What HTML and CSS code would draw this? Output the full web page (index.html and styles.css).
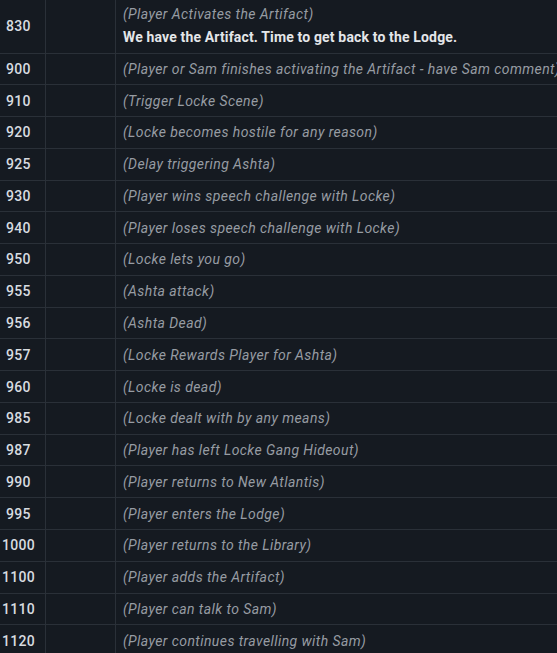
FILE: index.html
```html
<!DOCTYPE html>
<html>
<head>
<meta charset="utf-8">
<link rel="stylesheet" href="styles.css">
</head>
<body>
<div class="table">
  <div class="row first">
    <div class="cell num">830</div>
    <div class="cell blank"></div>
    <div class="cell text">
      <div class="note">(Player Activates the Artifact)</div>
      <div class="line">We have the Artifact. Time to get back to the Lodge.</div>
    </div>
  </div>
  <div class="row"><div class="cell num">900</div><div class="cell blank"></div><div class="cell text"><span class="note">(Player or Sam finishes activating the Artifact - have Sam comment)</span></div></div>
  <div class="row"><div class="cell num">910</div><div class="cell blank"></div><div class="cell text"><span class="note">(Trigger Locke Scene)</span></div></div>
  <div class="row"><div class="cell num">920</div><div class="cell blank"></div><div class="cell text"><span class="note">(Locke becomes hostile for any reason)</span></div></div>
  <div class="row"><div class="cell num">925</div><div class="cell blank"></div><div class="cell text"><span class="note">(Delay triggering Ashta)</span></div></div>
  <div class="row"><div class="cell num">930</div><div class="cell blank"></div><div class="cell text"><span class="note">(Player wins speech challenge with Locke)</span></div></div>
  <div class="row"><div class="cell num">940</div><div class="cell blank"></div><div class="cell text"><span class="note">(Player loses speech challenge with Locke)</span></div></div>
  <div class="row"><div class="cell num">950</div><div class="cell blank"></div><div class="cell text"><span class="note">(Locke lets you go)</span></div></div>
  <div class="row"><div class="cell num">955</div><div class="cell blank"></div><div class="cell text"><span class="note">(Ashta attack)</span></div></div>
  <div class="row"><div class="cell num">956</div><div class="cell blank"></div><div class="cell text"><span class="note">(Ashta Dead)</span></div></div>
  <div class="row"><div class="cell num">957</div><div class="cell blank"></div><div class="cell text"><span class="note">(Locke Rewards Player for Ashta)</span></div></div>
  <div class="row"><div class="cell num">960</div><div class="cell blank"></div><div class="cell text"><span class="note">(Locke is dead)</span></div></div>
  <div class="row"><div class="cell num">985</div><div class="cell blank"></div><div class="cell text"><span class="note">(Locke dealt with by any means)</span></div></div>
  <div class="row"><div class="cell num">987</div><div class="cell blank"></div><div class="cell text"><span class="note">(Player has left Locke Gang Hideout)</span></div></div>
  <div class="row"><div class="cell num">990</div><div class="cell blank"></div><div class="cell text"><span class="note">(Player returns to New Atlantis)</span></div></div>
  <div class="row"><div class="cell num">995</div><div class="cell blank"></div><div class="cell text"><span class="note">(Player enters the Lodge)</span></div></div>
  <div class="row"><div class="cell num">1000</div><div class="cell blank"></div><div class="cell text"><span class="note">(Player returns to the Library)</span></div></div>
  <div class="row"><div class="cell num">1100</div><div class="cell blank"></div><div class="cell text"><span class="note">(Player adds the Artifact)</span></div></div>
  <div class="row"><div class="cell num">1110</div><div class="cell blank"></div><div class="cell text"><span class="note">(Player can talk to Sam)</span></div></div>
  <div class="row"><div class="cell num">1120</div><div class="cell blank"></div><div class="cell text"><span class="note">(Player continues travelling with Sam)</span></div></div>
</div>
</body>
</html>
```
FILE: styles.css
```css
html, body {
  margin: 0;
  padding: 0;
  background: #151a21;
}
body {
  width: 557px;
  height: 653px;
  overflow: hidden;
  font-family: Roboto, "Liberation Sans", sans-serif;
}
.table {
  display: flex;
  flex-direction: column;
}
.row {
  display: grid;
  grid-template-columns: 46px 70px 1fr;
  height: 31.78px;
  box-sizing: border-box;
  border-bottom: 1px solid #2a3038;
}
.row.first {
  height: 53.5px;
}
.cell {
  display: flex;
  align-items: center;
  box-sizing: border-box;
  overflow: hidden;
  white-space: nowrap;
}
.num, .blank {
  border-right: 1px solid #2a3038;
}
.num {
  justify-content: center;
  padding-right: 8px;
  font-size: 14px;
  font-weight: 500;
  letter-spacing: 0.3px;
  color: #d8dce0;
}
.text {
  padding-left: 7px;
  font-size: 14px;
}
.first .text {
  flex-direction: column;
  align-items: flex-start;
  justify-content: center;
  gap: 7px;
  padding-bottom: 1px;
}
.note {
  font-style: italic;
  letter-spacing: 0.42px;
  color: #979ca3;
}
.line {
  font-weight: 700;
  letter-spacing: 0.15px;
  color: #e4e6e9;
}
```
